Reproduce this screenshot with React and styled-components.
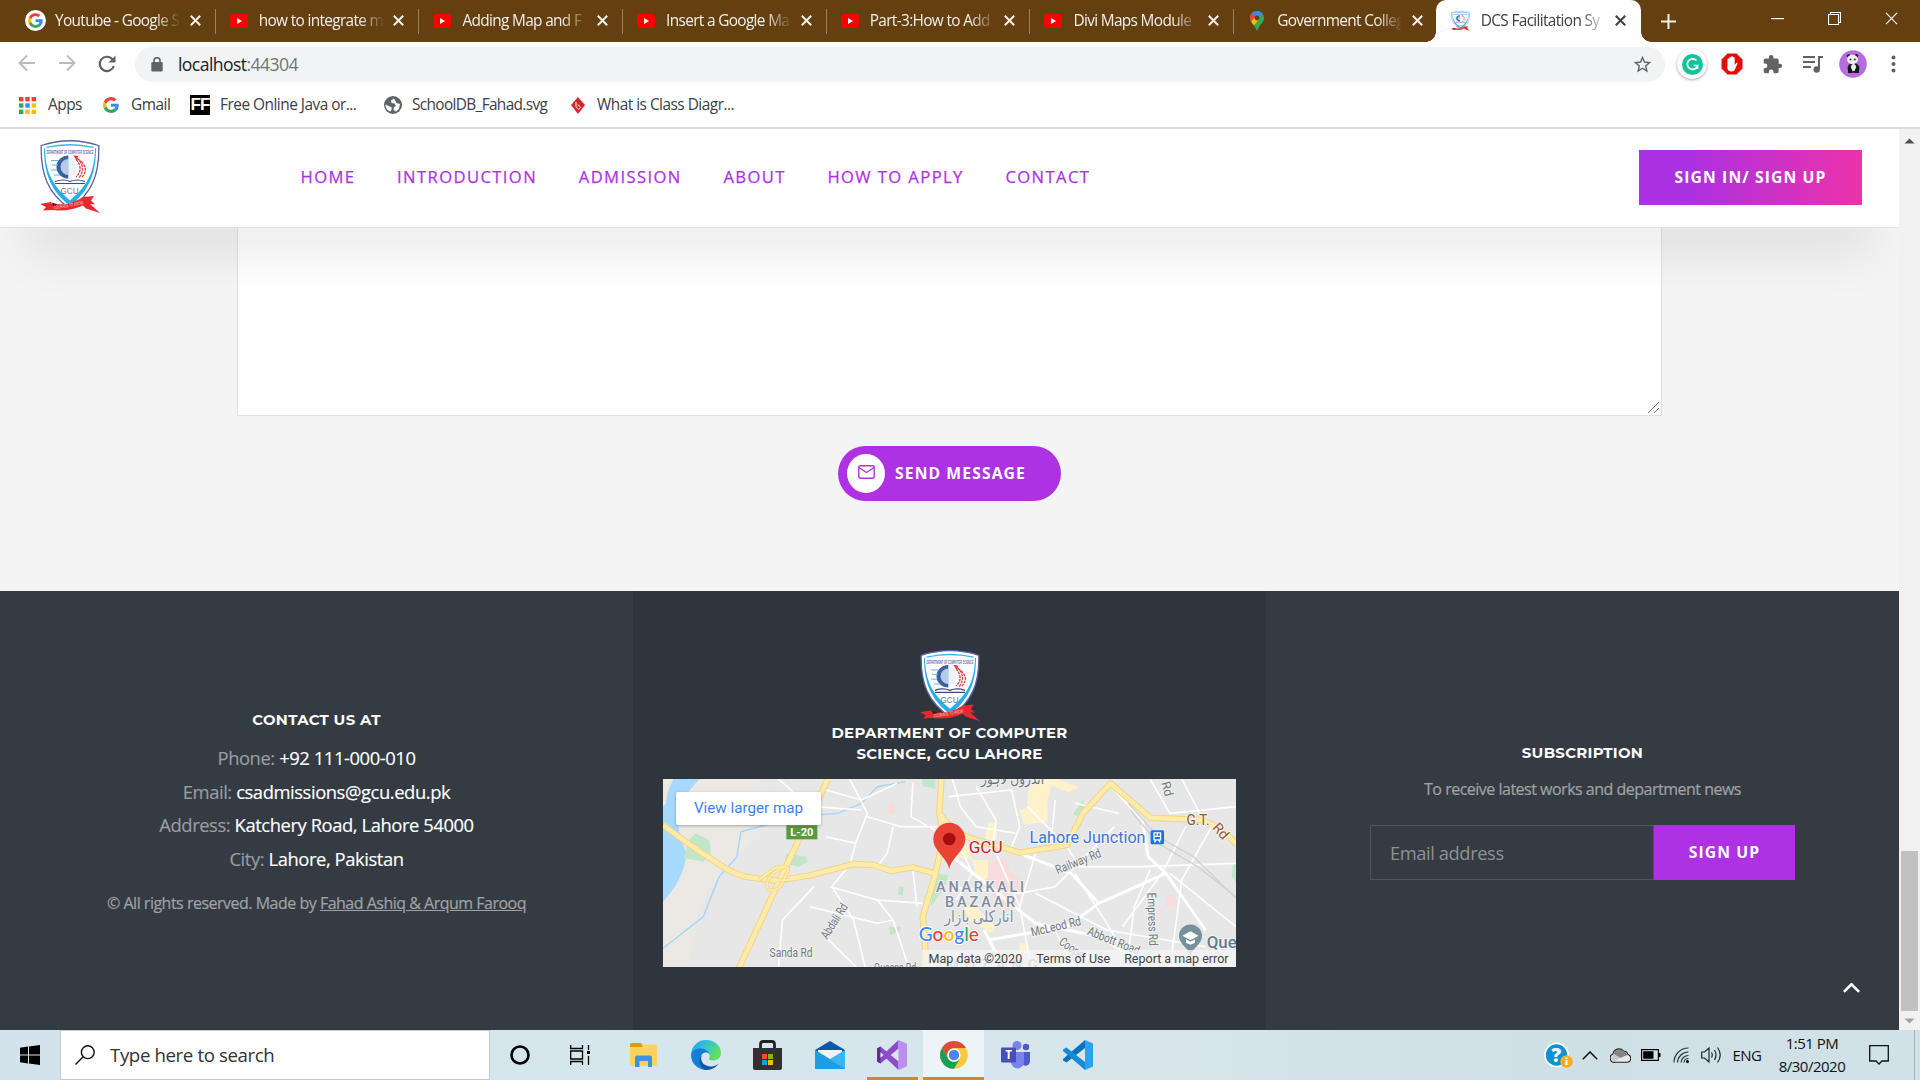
import React from "react";
import styled, { createGlobalStyle, css } from "styled-components";

const Global = createGlobalStyle`
  * { box-sizing: border-box; }
  html, body { margin: 0; padding: 0; }
  body { width: 1920px; height: 1080px; overflow: hidden; background: #fff; font-family: "Open Sans", "Noto Sans", sans-serif; }
  svg { display: block; flex: none; }
`;

const Screen = styled.div`
  width: 1920px;
  height: 1080px;
  display: flex;
  flex-direction: column;
`;

/* ---------- browser chrome ---------- */
const TabStrip = styled.div`
  height: 42px;
  flex: none;
  background: #643f10;
  display: flex;
  padding-left: 11px;
`;
const Tab = styled.div`
  width: ${(p) => (p.$active ? "205px" : "203.7px")};
  height: 42px;
  flex: none;
  display: flex;
  align-items: center;
  padding-left: ${(p) => (p.$active ? "15px" : "14px")};
  padding-bottom: 1px;
  position: relative;
  color: ${(p) => (p.$active ? "#3c4043" : "#f3efe9")};
  ${(p) =>
    p.$active
      ? css`
          background: #fff;
          border-radius: 10px 10px 0 0;
          margin-left: -1px;
          &::before, &::after {
            content: "";
            position: absolute;
            bottom: 0;
            width: 10px;
            height: 10px;
          }
          &::before { left: -10px; background: radial-gradient(circle at 0 0, transparent 9.5px, #fff 10px); }
          &::after { right: -10px; background: radial-gradient(circle at 100% 0, transparent 9.5px, #fff 10px); }
        `
      : css`
          &::after {
            content: "";
            position: absolute;
            right: -1px;
            display: ${p.$last ? "none" : "block"};
            top: 9px;
            width: 1px;
            height: 25px;
            background: #9a815f;
          }
        `}
`;
const Favicon = styled.div`
  width: 20px;
  height: 20px;
  margin-right: 10px;
  display: flex;
  align-items: center;
  justify-content: center;
`;
const TabTitle = styled.div`
  width: 124px;
  margin-right: 10.5px;
  overflow: hidden;
  white-space: nowrap;
  font-size: 15.4px;
  line-height: 24px;
  letter-spacing: -0.66px;
  mask-image: linear-gradient(90deg, #000 100px, transparent 126px);
`;
const NewTab = styled.div`
  width: 40px;
  margin-left: 8px;
  display: flex;
  align-items: center;
  justify-content: center;
`;
const WindowButtons = styled.div`
  margin-left: auto;
  display: flex;
  height: 37px;
  align-items: center;
`;
const WindowButton = styled.div`
  width: 57px;
  display: flex;
  justify-content: center;
`;
const Toolbar = styled.div`
  height: 44px;
  flex: none;
  display: flex;
  align-items: center;
`;
const ToolSlot = styled.div`
  width: 40.2px;
  display: flex;
  justify-content: center;
`;
const NavButtons = styled.div`
  display: flex;
  width: 135px;
  padding-left: 7px;
`;
const Omnibox = styled.div`
  width: 1530px;
  height: 35px;
  border-radius: 18px;
  background: #f1f3f4;
  display: flex;
  align-items: center;
  padding: 0 12px 0 16px;
`;
const Url = styled.div`
  margin-left: 15px;
  flex: 1;
  font-size: 17.6px;
  letter-spacing: -0.58px;
  line-height: 26px;
  color: #202124;
  span { color: #70757a; }
`;
const Extensions = styled.div`
  display: flex;
  padding-left: 7px;
  align-items: center;
`;
const GrammarlyBadge = styled.div`
  width: 30px;
  height: 30px;
  border-radius: 50%;
  background: #fff;
  box-shadow: 0 1px 3px rgba(0, 0, 0, 0.35);
  display: flex;
  align-items: center;
  justify-content: center;
`;
const Bookmarks = styled.div`
  height: 41px;
  flex: none;
  display: flex;
  align-items: center;
  padding-left: 19px;
  padding-bottom: 3px;
`;
const Bookmark = styled.div`
  display: flex;
  align-items: center;
  gap: ${(p) => p.$gap || 10}px;
  width: ${(p) => p.$w}px;
  white-space: nowrap;
  font-size: 15.4px;
  line-height: 24px;
  letter-spacing: ${(p) => p.$ls || "-0.5px"};
  color: #3c4043;
`;
const FF = styled.div`
  width: 20px;
  height: 20px;
  background: #000;
  color: #fff;
  font: bold 17px/20px "Liberation Sans", Arial, sans-serif;
  letter-spacing: -1px;
  text-align: center;
`;

/* ---------- page ---------- */
const Viewport = styled.div`
  height: 903px;
  flex: none;
  display: flex;
  border-top: 2px solid #dadce0;
  overflow: hidden;
`;
const Page = styled.div`
  width: 1899px;
  display: flex;
  flex-direction: column;
  background: #f4f4f4;
  overflow: hidden;
`;
const Header = styled.header`
  height: 99px;
  flex: none;
  background: #fff;
  border-bottom: 1px solid #e4e4e4;
  box-shadow: 0 50px 50px -25px rgba(0, 0, 0, 0.085);
  z-index: 2;
  display: flex;
  align-items: center;
  padding: 0 37px 2px 40px;
`;
const Nav = styled.nav`
  display: flex;
  gap: 41.7px;
  margin-left: 200.5px;
  flex: 1;
`;
const NavLink = styled.a`
  color: #ae32e4;
  font-size: 16.6px;
  -webkit-text-stroke: 0.25px #ae32e4;
  letter-spacing: 1.4px;
  line-height: 24px;
  white-space: nowrap;
`;
const SolidButton = styled.div`
  width: ${(p) => p.$w}px;
  height: 55px;
  display: flex;
  align-items: center;
  justify-content: center;
  padding-bottom: 1px;
  color: #fff;
  font-size: 15.7px;
  font-weight: 700;
  letter-spacing: 1.1px;
  white-space: nowrap;
  background: ${(p) => (p.$gradient ? "linear-gradient(90deg, #ab31e2 22%, #ed32a9 100%)" : "#ae32e4")};
`;
const FormArea = styled.section`
  height: 363px;
  flex: none;
  display: flex;
  flex-direction: column;
  align-items: center;
  padding-right: 1px;
`;
const MessageBox = styled.div`
  width: 1425px;
  height: 188px;
  background: #fff;
  border: 1px solid #e1e1e1;
  border-top: 0;
  display: flex;
  align-items: flex-end;
  justify-content: flex-end;
`;
const SendButton = styled.div`
  margin-top: 30px;
  width: 223px;
  height: 55px;
  border-radius: 28px;
  background: #ae32e4;
  display: flex;
  align-items: center;
  padding-left: 9px;
  color: #fff;
  font-size: 15.7px;
  font-weight: 700;
  letter-spacing: 1.1px;
  white-space: nowrap;
`;
const SendLabel = styled.span`
  padding-bottom: 1px;
`;
const SendIcon = styled.div`
  width: 38px;
  height: 39px;
  border-radius: 50%;
  background: #fff;
  display: flex;
  align-items: center;
  justify-content: center;
  margin-right: 10.5px;
  padding: 0 0 3px 1px;
`;
const Footer = styled.footer`
  height: 440px;
  flex: none;
  display: flex;
`;
const FooterCol = styled.div`
  width: 633px;
  display: flex;
  flex-direction: column;
  align-items: center;
  padding-top: ${(p) => p.$top}px;
  background: ${(p) => (p.$dark ? "#2f353d" : "#353b43")};
  position: relative;
`;
const Heading = styled.h6`
  margin: ${(p) => p.$mt || 0}px 0 0;
  font-family: Montserrat, Inter, sans-serif;
  font-size: 14.9px;
  font-weight: 700;
  line-height: 21px;
  letter-spacing: 0.3px;
  color: #fff;
  text-align: center;
  white-space: pre-line;
`;
const ContactList = styled.div`
  margin-top: 10px;
  display: flex;
  flex-direction: column;
  align-items: center;
`;
const ContactLine = styled.div`
  font-size: 18.4px;
  line-height: 33.7px;
  letter-spacing: -0.43px;
  color: #fff;
  -webkit-text-stroke: 0.15px;
  white-space: nowrap;
  span { color: #9b9da1; }
`;
const SmallText = styled.p`
  margin: ${(p) => p.$mt}px 0 0;
  font-size: 16px;
  line-height: 24px;
  letter-spacing: -0.5px;
  color: #a0a2a5;
  -webkit-text-stroke: 0.2px;
  white-space: nowrap;
`;
const Subscribe = styled.div`
  display: flex;
  margin-top: 24px;
`;
const EmailField = styled.div`
  width: 284px;
  height: 55px;
  border: 1px solid #50565c;
  padding-left: 19px;
  font-size: 18.3px;
  line-height: 53px;
  letter-spacing: -0.4px;
  color: #8d9196;
`;
const ToTop = styled.div`
  position: absolute;
  right: 39px;
  bottom: 38px;
`;
const MapFrame = styled.div`
  width: 573px;
  height: 188px;
  margin-top: 14px;
  position: relative;
  overflow: hidden;
`;
const MapLink = styled.div`
  position: absolute;
  left: 13px;
  top: 13px;
  width: 145px;
  height: 33px;
  border-radius: 2px;
  background: #fff;
  box-shadow: 0 1px 3px rgba(0, 0, 0, 0.3);
  color: #427fed;
  font: 15.2px/32px Roboto, sans-serif;
  text-align: center;
  white-space: nowrap;
`;
const MapCredits = styled.div`
  position: absolute;
  right: 0;
  bottom: 0;
  height: 17px;
  padding: 0 7.5px 0 7px;
  background: rgba(245, 245, 245, 0.75);
  display: flex;
  gap: 14px;
  color: #444;
  font: 12.5px/17px Roboto, sans-serif;
  white-space: nowrap;
`;

const ScrollTrack = styled.div`
  width: 21px;
  background: #f1f1f1;
  display: flex;
  flex-direction: column;
  align-items: center;
  padding: 9px 0 6px;
`;
const ScrollThumb = styled.div`
  width: 17px;
  height: 160px;
  margin-top: auto;
  margin-bottom: 7px;
  background: #c1c1c1;
`;

/* ---------- taskbar ---------- */
const Taskbar = styled.div`
  height: 50px;
  flex: none;
  display: flex;
  background: linear-gradient(90deg, #d2e3ec, #d6e6ec 40%, #d8e6eb 60%, #cfdfe6 80%, #d0e1e8);
`;
const TaskCell = styled.div`
  width: ${(p) => p.$w || 61.7}px;
  height: 50px;
  display: flex;
  align-items: center;
  justify-content: center;
  background: ${(p) => (p.$active ? "#edf4f7" : "none")};
  box-shadow: ${(p) => (p.$active ? "inset 0 -3px #cd8a2d" : "none")};
`;
const OpenMark = styled.div`
  width: 51px;
  height: 50px;
  display: flex;
  align-items: center;
  justify-content: center;
  box-shadow: inset 0 -3px #cd8a2d;
`;
const SearchBox = styled.div`
  width: 430px;
  height: 50px;
  background: #fff;
  border: 1px solid #c6c8c9;
  display: flex;
  align-items: center;
  padding: 0 0 1px 14px;
  gap: 15px;
  font-size: 18.7px;
  letter-spacing: -0.4px;
  color: #333;
`;
const Tray = styled.div`
  margin-left: auto;
  display: flex;
  align-items: center;
  color: #111;
  font-size: 15px;
`;
const TrayCell = styled.div`
  width: ${(p) => p.$w}px;
  padding-right: ${(p) => p.$pr || 0}px;
  display: flex;
  justify-content: center;
  letter-spacing: -0.5px;
`;
const Clock = styled.div`
  width: 88px;
  text-align: center;
  font-size: 15px;
  line-height: 23px;
  letter-spacing: -0.5px;
  white-space: nowrap;
`;
const ShowDesktop = styled.div`
  width: 6px;
  height: 50px;
  border-left: 1px solid #a3b0b6;
`;

/* ---------- drawings ---------- */
const GoogleG = ({ size = 16, badge }) => (
  <svg width={size} height={size} viewBox={badge ? "-5 -5 34 34" : "0 0 24 24"}>
    {badge && <circle cx="12" cy="12" r="17" fill="#fff" />}
    <path fill="#4285F4" d="M23.5 12.3c0-.8-.1-1.6-.2-2.3H12v4.500h6.500a5.500 5.500 0 0 1-2.400 3.600v3h3.900c2.200-2.100 3.500-5.100 3.500-8.800z" />
    <path fill="#34A853" d="M12 24c3.200 0 6-1.100 8-2.900l-3.900-3c-1.100.7-2.500 1.200-4.100 1.200-3.100 0-5.800-2.100-6.700-5H1.300v3.100A12 12 0 0 0 12 24z" />
    <path fill="#FBBC05" d="M5.300 14.300a7.200 7.200 0 0 1 0-4.600V6.600h-4a12 12 0 0 0 0 10.800z" />
    <path fill="#EA4335" d="M12 4.800c1.800 0 3.300.6 4.600 1.800L20 3.200A12 12 0 0 0 1.300 6.600l4 3.100c.9-2.900 3.600-4.900 6.700-4.900z" />
  </svg>
);
const YouTube = () => (
  <svg width="18" height="14" viewBox="0 0 18 14">
    <rect width="18" height="14" rx="3" fill="#f00" />
    <path d="M7 4l5 3-5 3z" fill="#fff" />
  </svg>
);
const MapsPin = ({ w = 14, h = 20 }) => (
  <svg width={w} height={h} viewBox="0 0 14 20">
    <path d="M7 0C3 0 0 3 0 7c0 4 3 5.500 5 9l2 4 2-4c2-3.500 5-5 5-9 0-4-3-7-7-7z" fill="#34a853" />
    <path d="M0 7c0-1.800.7-3.500 2-4.800l4 3.300L1.500 11C.6 9.900 0 8.600 0 7z" fill="#ea4335" />
    <path d="M1.700 2.500A7 7 0 0 1 12.500 2.600L8 8z" fill="#4285f4" />
    <path d="M1.200 10.600L6 5l2.500 4-4.600 5.400c-1-1.300-2.100-2.300-2.700-3.800z" fill="#fbbc04" />
    <circle cx="7" cy="7" r="2.400" fill="#643f10" />
  </svg>
);
const Cross = ({ size = 11, color, w = 2 }) => (
  <svg width={size} height={size} viewBox="0 0 11 11" stroke={color} strokeWidth={w}>
    <path d="M.8.8l9.400 9.400M10.200.8L.8 10.200" />
  </svg>
);
const Crest = ({ w = 60, h = 74 }) => (
  <svg width={w} height={h} viewBox="0 0 60 74" preserveAspectRatio="none">
    <path d="M1.200 5.500Q30-4 58.800 5.500C59.500 34 52 54 30 68.500C8 54 .5 34 1.200 5.500z" fill="#fff" stroke="#5a62a4" strokeWidth="1.300" />
    <path d="M4 8C4 34 11 51 30 66C49 51 56 34 56 8L55 8.500C54.500 32 48 45 30 60.500C12 45 5.500 32 5 8.500z" fill="#27aee8" />
    <path d="M6.500 8Q30 3 53.500 8L53.500 6.800Q30 1 6.500 6.800z" fill="#35b8ee" />
    <text x="6.500" y="14" textLength="47" lengthAdjust="spacingAndGlyphs" fontFamily="Liberation Sans, sans-serif" fontWeight="bold" fontSize="5.500" fill="#6a6eaa">DEPARTMENT OF COMPUTER SCIENCE</text>
    <path d="M28.500 15.500A12 11.500 0 0 0 28.500 38.500z" fill="#3e5f9e" />
    <path d="M28.500 19A8 8 0 0 0 28.500 35z" fill="#b3cde8" />
    <path d="M28.500 16A11 11.500 0 0 1 28.500 38" fill="#eef3f8" />
    <path d="M11 20.500h7M12 25h6M11 30h6M14 35h6" stroke="#5cb8e6" strokeWidth="1" />
    <path d="M37 18c7 6 7 13 2 20M38 19c9 6 9 13 4 18M36 19c6 8 5 13 0 18" fill="none" stroke="#dc3c44" strokeWidth="1.300" strokeDasharray="3 .8" />
    <path d="M33.500 15.500l5 .5-2.500 3.500z" fill="#e22d35" />
    <path d="M15 41.500q8-3 15 0q7-3 15 0M15 43.500h30" fill="none" stroke="#3d4789" strokeWidth="1.200" />
    <text x="20.500" y="54" textLength="18" lengthAdjust="spacingAndGlyphs" fontFamily="Liberation Sans, sans-serif" fontSize="9" fill="#75718f">GCU</text>
    <path d="M0 64l11-2 1 2Q30 66 43 57l11-1-3 4.500 4 4-5-.5 10 9-14-4.500-3-3Q28 72 12 70l-9 .5 3-3.500z" fill="#e4292f" />
    <path d="M12 62.500l6 2-5 1.500z" fill="#4a1b22" />
    <text transform="translate(14 69.500) rotate(-10)" textLength="30" lengthAdjust="spacingAndGlyphs" fontFamily="Liberation Sans, sans-serif" fontSize="5" fill="#ffd9da">COURAGE TO KNOW</text>
  </svg>
);

const Arrow = ({ flip }) => (
  <svg width="18" height="18" viewBox="0 0 18 18" fill="none" stroke="#babcbe" strokeWidth="1.900" transform={flip ? "scale(-1 1)" : undefined}>
    <path d="M17 9H2M9 1.500L1.500 9L9 16.500" />
  </svg>
);
const Reload = () => (
  <svg width="20" height="20" viewBox="0 0 20 20" fill="none" stroke="#5f6368" strokeWidth="2.200">
    <path d="M16.800 12a7.200 7.200 0 1 1-1.300-6.600L17.500 7.500" />
    <path d="M18.500 1.500V8.500H11.500z" fill="#5f6368" stroke="none" />
  </svg>
);
const Lock = () => (
  <svg width="12" height="15" viewBox="0 0 12 15">
    <rect x=".3" y="5" width="11.400" height="9.500" rx="1.300" fill="#5f6368" />
    <path d="M3 6V3.700a3 3 0 0 1 6 0V6" fill="none" stroke="#5f6368" strokeWidth="1.600" />
  </svg>
);
const Star = () => (
  <svg width="21" height="21" viewBox="0 0 24 24" fill="#5f6368">
    <path d="M22 9.240l-7.190-.62L12 2 9.190 8.630 2 9.240l5.460 4.730L5.820 21 12 17.270 18.180 21l-1.630-7.030zM12 15.400l-3.760 2.270 1-4.280-3.320-2.880 4.380-.38L12 6.100l1.710 4.040 4.380.38-3.320 2.880 1 4.280z" />
  </svg>
);
const Adblock = () => (
  <svg width="22" height="22" viewBox="0 0 22 22">
    <path d="M6.500.5h9l6 6v9l-6 6h-9l-6-6v-9z" fill="#e40d0d" />
    <path d="M6.500 12V6.500a.9.9 0 0 1 1.800 0V10V4.800a.9.9 0 0 1 1.800 0V9.500V4a.9.9 0 0 1 1.800 0V9.500V5a.9.9 0 0 1 1.800 0V12l1.500-2c.6-.6 1.500-.1 1.200.7l-2.600 6c-.6 1.200-1.500 1.700-3 1.700c-3 0-4.500-1.500-4.500-4z" fill="#fff" />
  </svg>
);
const Puzzle = () => (
  <svg width="21" height="21" viewBox="0 0 24 24" fill="#5f6368">
    <path d="M20.500 11H19V7c0-1.100-.9-2-2-2h-4V3.500a2.500 2.500 0 0 0-5 0V5H4c-1.100 0-2 .9-2 2v3.800h1.500a2.700 2.700 0 0 1 0 5.400H2V20c0 1.100.9 2 2 2h3.800v-1.500a2.700 2.700 0 0 1 5.400 0V22H17c1.100 0 2-.9 2-2v-4h1.500a2.500 2.500 0 0 0 0-5z" />
  </svg>
);
const Playlist = () => (
  <svg width="21" height="18" viewBox="0 0 21 18">
    <path d="M1 2h12M1 7h12M1 12h8" stroke="#5f6368" strokeWidth="2" />
    <path d="M17 14V2h4" fill="none" stroke="#5f6368" strokeWidth="2" />
    <circle cx="14.700" cy="14.500" r="3.200" fill="#5f6368" />
  </svg>
);
const Panda = () => (
  <svg width="28" height="28" viewBox="0 0 28 28">
    <circle cx="14" cy="14" r="13.800" fill="#b76be3" />
    <ellipse cx="14.500" cy="18" rx="6" ry="5" fill="#222" />
    <ellipse cx="14.500" cy="17.500" rx="2.500" ry="3.500" fill="#eee" />
    <path d="M9 17v6h4v-4zM20 17v6h-4v-4z" fill="#181818" />
    <circle cx="9.500" cy="6" r="1.800" fill="#222" />
    <circle cx="17.500" cy="5.800" r="1.800" fill="#222" />
    <ellipse cx="13.500" cy="9.500" rx="5.500" ry="4.700" fill="#efefef" />
    <circle cx="11.500" cy="9.500" r="1" fill="#333" />
    <circle cx="15.800" cy="9.500" r="1" fill="#333" />
  </svg>
);
const Dots = () => (
  <svg width="5" height="18" viewBox="0 0 5 18" fill="#5f6368">
    <circle cx="2.500" cy="2.500" r="2" /><circle cx="2.500" cy="9" r="2" /><circle cx="2.500" cy="15.500" r="2" />
  </svg>
);
const AppsGrid = () => {
  const colors = ["#ea4335", "#ea4335", "#ea4335", "#34a853", "#4285f4", "#fbbc04", "#34a853", "#fbbc04", "#fbbc04"];
  return (
    <svg width="17" height="17" viewBox="0 0 17 17">
      {colors.map((c, i) => <rect key={i} x={(i % 3) * 6.300} y={Math.floor(i / 3) * 6.300} width="4.400" height="4.400" fill={c} />)}
    </svg>
  );
};
const Globe = () => (
  <svg width="18" height="18" viewBox="0 0 18 18">
    <circle cx="9" cy="9" r="9" fill="#5f6368" />
    <path d="M10 2.500L7 4.500 7.500 7l3 .5 1.500 2.500-2 1L9.500 14 12 15.500l3-2.500 1-5-3.500-1zM1.500 8.500l4 2 2 .5v3L6 15.500A7 7 0 0 1 1.500 8.500z" fill="#fff" />
  </svg>
);
const Paradigm = () => (
  <svg width="14" height="17" viewBox="0 0 14 17">
    <path d="M7 0l7 8-7 9-7-9z" fill="#cf2b2f" />
    <path d="M5 5v4.500L7.500 12.500 9.500 10.500 7 7.500" fill="none" stroke="#fff" strokeWidth="1" />
  </svg>
);
const Triangle = ({ down, color }) => (
  <svg width="11" height="6" viewBox="0 0 11 6"><path d={down ? "M.5.5h10L5.500 5.500z" : "M.5 5.500h10L5.500.5z"} fill={color} /></svg>
);
const Mail = () => (
  <svg width="17" height="14" viewBox="0 0 17 14" fill="none" stroke="#ae32e4" strokeWidth="1.400">
    <rect x=".8" y=".8" width="15.400" height="12.400" rx="1.500" />
    <path d="M1 2.500l7.500 5L16 2.500" />
  </svg>
);

/* ---------- map ---------- */
const px = (x) => (x - 58) / 2.529;
const py = (y) => (y - 417) / 3;
const Roads = ({ d, color, w }) => <path d={d} fill="none" stroke={color} strokeWidth={w} strokeLinejoin="round" vectorEffect="non-scaling-stroke" />;
const Label = ({ x, y, size = 12.5, len, rot = 0, fill = "#6f7780", weight = 400, anchor = "middle", spaced, children }) => (
  <text
    transform={`translate(${px(x)} ${py(y)}) rotate(${rot})`}
    textAnchor={anchor}
    textLength={len}
    lengthAdjust={spaced ? "spacing" : "spacingAndGlyphs"}
    fontFamily="Roboto, 'DejaVu Sans', sans-serif"
    fontSize={size}
    fontWeight={weight}
    fill={fill}
    stroke="#f3f3f3"
    strokeWidth="2"
    paintOrder="stroke"
  >
    {children}
  </text>
);
const MAIN_ROADS =
  "M58 555Q130 620 190 665Q245 712 290 714L350 722L430 706L540 672L590 675L635 693L690 682L745 700M475 417L345 740L250 985M762 417L757 520L768 590L745 710L715 830L725 985M757 520Q790 580 850 600L960 638L1080 615L1120 520L1190 430L1290 533L1420 540Q1470 560 1510 615";
const CityMap = () => (
  <svg width="573" height="188" viewBox="0 0 573 188">
    <rect width="573" height="188" fill="#e7e7e7" />
    <g transform="scale(.39541 .33333) translate(-58 -417)">
      <path d="M58 417H300L330 560 215 680 150 800 120 985H58z" fill="#ece9e4" />
      <path d="M58 417H150Q105 475 98 520Q90 570 118 640Q110 720 58 785z" fill="#a7d8fd" />
      <path d="M58 417H85Q65 460 66 490L58 500z" fill="#ece9e4" />
      <path d="M140 580l35 20 5 40-20 25-50-10 10-50zM370 640l50 10 5 15-25 15-35-10zM712 417h35v30l-30-8zM745 700l35 5-10 40-35 55zM655 740l12 0-3 28-12-4zM1120 478l10 40-20 15-15-10zM1500 670h10v60l-14-20zM630 860l30 0-5 15-22 10z" fill="#c2e6ca" />
      <path d="M995 417h60l55 25-25 15-45-20-10 50 0 60-60 5-10-40 20-10 0-40zM880 550h22v50h-30zM790 600l40 20 10 40-40-10zM840 660l40 0 5 50-30 20zM820 800l20-10 60 70-10 20-60-40zM960 910h20v30h-20z" fill="#fff2cb" />
      <path d="M880 670l45-15 10 40 25 20 0 70-40 40-20-40-20-60zM625 490h20v30h-20zM1330 770l25-15v40l-25 5z" fill="#f8dcdc" />
      <Roads w="1.500" color="#a9d6f7" d="M670 425L600 440L560 490L500 520L400 530L255 575L245 650L200 710L160 830L58 925" />
      <Roads w="1.600" color="#fff" d="M350 417L400 470L460 465M440 500L560 510M470 450L560 480L650 430M530 417L575 520L545 610L530 675L485 740M575 530L660 560L750 560M690 430L685 530L745 570M640 560L625 640L600 680M545 610L470 590M480 740L600 780L715 790M440 740L360 840L350 985M485 740L540 840L570 985M430 800L600 850L640 840M600 780L640 840L680 985M460 880L550 985M690 690L700 800M790 417L810 500L850 560L950 580M780 470L940 450M850 440L900 540L890 640M940 450L960 560L940 620M810 620L840 700L800 780M900 640L960 800L990 985M1000 640L960 800M780 740L960 760M980 500L1080 620M1100 490L1210 520M1040 600L1050 480M1080 620L1110 680L1270 680L1507 670M1200 560L1050 740L960 760M1290 417L1340 520L1507 500M1370 417L1420 530M1340 700L1507 860M1100 700L1180 850L1220 930M1290 690L1250 800L1230 985M1380 560L1320 700L1220 860M1450 550L1370 720L1340 985M1000 760L1180 870L1430 920M1040 850L1100 985" />
      <Roads w="3" color="#fff" d="M1190 435L1270 540L1285 650L1330 700L1430 870M1330 700L1160 790L1080 860L880 900M870 870L920 985M780 640L1000 850L1160 890L1230 940M1160 790L1090 700L960 640" />
      <Roads w="1.500" color="#d0d3d6" d="M1235 490L1310 590L1400 650L1507 775M1240 510L1310 610L1410 680L1507 770" />
      <Roads w="6.500" color="#efd489" d={MAIN_ROADS} />
      <Roads w="4.500" color="#ffeba8" d={MAIN_ROADS} />
      <Roads w="3.500" color="#efd489" d="M365 680Q325 700 320 735Q325 765 355 740L375 690Q370 670 340 685L300 720M350 720L380 720" />
      <Roads w="2" color="#ffeba8" d="M365 680Q325 700 320 735Q325 765 355 740L375 690Q370 670 340 685L300 720M350 720L380 720" />
    </g>
    <rect x={px(370)} y={py(556)} width="31" height="14" fill="#5b9a3c" />
    <text x={px(409)} y={py(588)} textAnchor="middle" textLength="23" fontFamily="Roboto, sans-serif" fontWeight="700" fontSize="11" fill="#fff">L-20</text>
    <Label x={942} y={433} size={15} len={63}>اندرون لاہور</Label>
    <Label x={1323} y={450} rot={75} len={15}>Rd</Label>
    <Label x={1411} y={554} size={15} len={23} fill="#8b5a2b">G.T.</Label>
    <Label x={1460} y={583} size={14} rot={48} len={17} fill="#8b5a2b">Rd</Label>
    <Label x={985} y={608} size={16} len={116} fill="#3d73d8" anchor="start">Lahore Junction</Label>
    <rect x={px(1291)} y={py(571)} width="13.500" height="14" rx="1.500" fill="#1a73e8" />
    <path transform={`translate(${px(1291)} ${py(571)})`} d="M3.500 2.500h6.500v7h-6.500zM4 12l1.500-2.500M9.500 12L8 9.500M3.500 6h6.500M6.700 3v3" fill="none" stroke="#fff" strokeWidth="1.300" />
    <Label x={1112} y={676} rot={-22} len={48}>Railway Rd</Label>
    <Label x={500} y={850} rot={-57} len={39}>Abdali Rd</Label>
    <Label x={382} y={951} len={43}>Sanda Rd</Label>
    <Label x={1054} y={872} rot={-13} len={51}>McLeod Rd</Label>
    <Label x={1194} y={914} rot={22} len={55}>Abbott Road</Label>
    <Label x={1085} y={934} rot={36} len={27}>Coope</Label>
    <Label x={1285} y={838} rot={88} len={53}>Empress Rd</Label>
    <Label x={860} y={755} size={14.5} len={88} weight={500} fill="#818b9d" spaced>ANARKALI</Label>
    <Label x={860} y={800} size={14.5} len={70} weight={500} fill="#818b9d" spaced>BAZAAR</Label>
    <Label x={857} y={845} size={16} len={69} fill="#818b9d">انارکلی بازار</Label>
    <Label x={890} y={990} size={15} len={92} weight={500} fill="#818b9d" spaced>MOZANG</Label>
    <Label x={645} y={996} len={42}>Queens Rd</Label>
    <path transform={`translate(${px(782)} ${py(688)})`} d="M0 0C-2-12-16-18-16-30a16 16.500 0 0 1 32 0C16-18 2-12 0 0z" fill="#ea4335" />
    <circle cx={px(782)} cy={py(597)} r="6.300" fill="#a50e0e" />
    <Label x={831} y={639} size={17} len={34} fill="#c5221f" anchor="start">GCU</Label>
    <path transform={`translate(${px(1392)} ${py(948)})`} d="M0 0C-1-8-11.500-11-11.500-20a11.500 11.500 0 0 1 23 0C11.500-11 1-8 0 0z" fill="#78909c" />
    <path transform={`translate(${px(1392)} ${py(890)})`} d="M-8-1L0-5.500 8-1 0 3.500zM-4.500 2.500V6L0 8 4.500 6V2.500L0 5z" fill="#fff" />
    <Label x={1433} y={923} size={17} anchor="start" weight={500} len={30} fill="#607d8b">Que</Label>
    <text x={px(705)} y={py(904)} fontFamily="Lato, sans-serif" fontSize="20" textLength="60" lengthAdjust="spacingAndGlyphs" stroke="#fff" strokeWidth="2" paintOrder="stroke" fontWeight="500">
      <tspan fill="#4285f4">G</tspan><tspan fill="#ea4335">o</tspan><tspan fill="#fbbc05">o</tspan><tspan fill="#4285f4">g</tspan><tspan fill="#34a853">l</tspan><tspan fill="#ea4335">e</tspan>
    </text>
  </svg>
);

/* ---------- taskbar drawings ---------- */
const WindowsLogo = () => (
  <svg width="20" height="20" viewBox="0 0 20 20"><path d="M0 2.800L8 1.600V9.500H0zM9 1.500L20 0V9.500H9zM0 10.500H8V18.400L0 17.200zM9 10.500H20V20L9 18.500z" /></svg>
);
const SearchGlass = () => (
  <svg width="20" height="20" viewBox="0 0 20 20" fill="none" stroke="#111" strokeWidth="1.400"><circle cx="12.800" cy="7.200" r="6.400" /><path d="M8.200 11.800L.5 19.500" /></svg>
);
const TaskView = () => (
  <svg width="21" height="20" viewBox="0 0 21 20" fill="none" stroke="#000" strokeWidth="1.300">
    <path d="M.7 0V3.500H12.500V0M.7 20V16.500H12.500V20M.7 6H12.500V14H.7zM18.500 0V5M18.500 11V20" /><rect x="17" y="6" width="3" height="3" fill="#000" stroke="none" />
  </svg>
);
const Explorer = () => (
  <svg width="27" height="24" viewBox="0 0 27 24">
    <path d="M0 1.500Q0 0 1.500 0H11l2 3v3H0z" fill="#dc9b0c" />
    <path d="M0 4H12l2-2.500H25.500Q27 1.500 27 3V21.500Q27 23 25.500 23H1.500Q0 23 0 21.500z" fill="#ffd25e" />
    <path d="M5 24V14.500Q5 12.500 7 12.500H20Q22 12.500 22 14.500V24H18V18H9.500V24z" fill="#3e93d8" />
  </svg>
);
const Edge = () => (
  <svg width="30" height="30" viewBox="0 0 30 30">
    <defs>
      <linearGradient id="edgeTop" x1="0" y1="0" x2="1" y2=".5"><stop offset="0" stopColor="#1a9fe0" /><stop offset=".5" stopColor="#34c1d9" /><stop offset="1" stopColor="#62e15a" /></linearGradient>
    </defs>
    <path d="M0 15A15 15 0 0 1 15 0C24 0 30 6 30 13C30 18 26 20.500 22 20.500C18 20.500 17.500 19 18.500 17.500C20 14 16 10 10 10C4 10 1 13 0 15z" fill="url(#edgeTop)" />
    <path d="M0 15C1 10 6 8 10 8.500C15 9 18 11.500 18.500 14C13 10 9 15 9.500 20C10 25 14 29 18 29.700A15 15 0 0 1 0 15z" fill="#137fd6" />
    <path d="M11 15C8 21 13 26.500 20 26.500C24 26.500 27 24 27.800 23.500A15 15 0 0 1 15 30C9 29 6 19 11 15z" fill="#1257a3" />
  </svg>
);
const Store = () => (
  <svg width="29" height="30" viewBox="0 0 29 30">
    <path d="M7.500 9V4.500Q7.500 1.500 10 1.500H19Q21.500 1.500 21.500 4.500V9" fill="none" stroke="#222" strokeWidth="2.800" />
    <path d="M0 8H29V28Q29 30 27 30H2Q0 30 0 28z" fill="#313131" />
    <path d="M9 14h5v5H9z" fill="#f25022" /><path d="M15 14h5v5h-5z" fill="#7fba00" /><path d="M9 20h5v5H9z" fill="#00a4ef" /><path d="M15 20h5v5h-5z" fill="#ffb900" />
  </svg>
);
const MailApp = () => (
  <svg width="30" height="28" viewBox="0 0 30 28">
    <path d="M0 9L15 0L30 9V14H0z" fill="#075ba8" /><path d="M3 9H27V18H3z" fill="#f2f2f2" />
    <path d="M0 9L15 18L30 9V28H0z" fill="#39b6ee" /><path d="M0 9L30 28H0z" fill="#1c9de5" />
  </svg>
);
const VisualStudio = () => (
  <svg width="30" height="30" viewBox="0 0 30 30">
    <path d="M0 8.500L3.500 6.500L21.500 21.500V30L3.500 13V17L21.500 0V8.500L3.500 23.500L0 21.500z" fill="#8a4cc8" fillRule="nonzero" />
    <path d="M0 8.500L3.500 6.500V23.500L0 21.500z" fill="#5e2e94" />
    <path d="M3.500 12.200V17.800L6.700 15z" fill="#d6e6ec" />
    <path d="M21.500 0L30 3.800V26.200L21.500 30z" fill="#bd8df2" />
  </svg>
);
const VSCode = () => (
  <svg width="30" height="30" viewBox="0 0 30 30">
    <path d="M0 19L22 0V8L3.500 22.500L0 20.500z" fill="#0a75bd" />
    <path d="M0 11L22 30V22L3.500 7.500L0 9.500z" fill="#178bd4" />
    <path d="M22 0l8 3.500V26.500L22 30z" fill="#29a3f0" />
  </svg>
);
const ChromeLogo = () => (
  <svg width="28" height="28" viewBox="0 0 28 28">
    <circle cx="14" cy="14" r="13.800" fill="#fbc83b" />
    <path d="M2 7A13.800 13.800 0 0 1 26 7H14A7 7 0 0 0 8 17.500z" fill="#dd4b3e" />
    <path d="M2 7A13.800 13.800 0 0 0 14 27.800L20 17.500A7 7 0 0 1 8 17.500z" fill="#1a9e58" />
    <circle cx="14" cy="14" r="6.600" fill="#fff" /><circle cx="14" cy="14" r="5.200" fill="#4a87ee" />
  </svg>
);
const Teams = () => (
  <svg width="29" height="28" viewBox="0 0 29 28">
    <circle cx="25" cy="6" r="3.200" fill="#5059c9" /><path d="M21 11h8v9a4.500 4.500 0 0 1-8 3z" fill="#5059c9" />
    <circle cx="16" cy="4.500" r="4.500" fill="#7b83eb" /><path d="M10 11H23V21a6.500 6.500 0 0 1-13 0z" fill="#7b83eb" />
    <rect y="6.500" width="15" height="15" rx="1" fill="#464eb8" />
    <text x="7.500" y="18" textAnchor="middle" fontFamily="Open Sans, sans-serif" fontWeight="700" fontSize="11.500" fill="#fff">T</text>
  </svg>
);
const HelpBadge = () => (
  <svg width="29" height="27" viewBox="0 0 29 27">
    <circle cx="12.500" cy="13" r="12.500" fill="#fff" /><circle cx="12.500" cy="13" r="10.700" fill="#0d93d2" />
    <text x="12" y="20" textAnchor="middle" fontFamily="Open Sans, sans-serif" fontWeight="800" fontSize="19" fill="#fff">?</text>
    <circle cx="22.500" cy="19.500" r="6.200" fill="#f8ac1a" /><path d="M22.500 18v5M22.500 15.500v1.500" stroke="#fff" strokeWidth="2" />
  </svg>
);
const Chevron = ({ w, h, color, stroke }) => (
  <svg width={w} height={h} viewBox="0 0 16 9" fill="none" stroke={color} strokeWidth={stroke}><path d="M.8 8.200L8 1L15.200 8.200" /></svg>
);
const Cloud = () => (
  <svg width="21" height="15" viewBox="0 0 21 15">
    <path d="M5 14.300A4.300 4.300 0 0 1 3 6A6 6 0 0 1 13.500 3A5 5 0 0 1 18 6.500A4 4 0 0 1 17 14.300z" fill="#e9eaea" stroke="#222" strokeWidth="1.100" />
    <path d="M3.500 6A6 6 0 0 1 13.500 3.500A5 5 0 0 1 17.500 7L10 10z" fill="#828485" />
    <path d="M1 11L3.500 6L10 9.500L5 13.500z" fill="#c7c9ca" />
  </svg>
);
const Battery = () => (
  <svg width="20" height="12" viewBox="0 0 20 12"><rect x=".6" y=".6" width="16.800" height="10.800" fill="none" stroke="#000" strokeWidth="1.200" /><path d="M2.200 2.200H12.500V9.800H2.200zM18 4h1.500v4H18z" /></svg>
);
const Wifi = () => (
  <svg width="17" height="16" viewBox="0 0 17 16" fill="none" stroke="#333" strokeWidth="1.200">
    <path d="M1 15.500A14.500 14.500 0 0 1 15.500 1M4.500 15.500A11 11 0 0 1 15.500 5M8 15.500A7.500 7.500 0 0 1 15.500 8.500M11 15.500A4.500 4.500 0 0 1 15.500 11.500" /><circle cx="14.500" cy="14.500" r="1.500" fill="#000" stroke="none" />
  </svg>
);
const Volume = () => (
  <svg width="21" height="18" viewBox="0 0 21 18" fill="none" stroke="#222" strokeWidth="1.200">
    <path d="M.7 6H3.500L8 2V16L3.500 12H.7zM10.500 6.500Q12 9 10.500 11.500M13.500 4Q16.500 9 13.500 14M16.500 1.500Q22 9 16.500 16.500" />
  </svg>
);
const Notification = () => (
  <svg width="20" height="20" viewBox="0 0 20 20" fill="none" stroke="#111" strokeWidth="1.300"><path d="M.7.700H19.300V16H13L10 19L7 16H.7z" /></svg>
);

const TABS = [
  { icon: <GoogleG size={21} badge />, title: "Youtube - Google S" },
  { icon: <YouTube />, title: "how to integrate m" },
  { icon: <YouTube />, title: "Adding Map and F" },
  { icon: <YouTube />, title: "Insert a Google Ma" },
  { icon: <YouTube />, title: "Part-3:How to Add" },
  { icon: <YouTube />, title: "Divi Maps Module" },
  { icon: <MapsPin />, title: "Government Colleg" },
  { icon: <Crest w={19} h={20} />, title: "DCS Facilitation Sy", active: true },
];
const BOOKMARKS = [
  { w: 84, gap: 12, icon: <AppsGrid />, text: "Apps" },
  { w: 87, gap: 12, icon: <GoogleG size={16} />, text: "Gmail" },
  { w: 194, icon: <FF>FF</FF>, text: "Free Online Java or..." },
  { w: 187, ls: "-0.65px", icon: <Globe />, text: "SchoolDB_Fahad.svg" },
  { w: 180, gap: 12, icon: <Paradigm />, text: "What is Class Diagr..." },
];
const CONTACTS = [
  ["Phone:", "+92 111-000-010"],
  ["Email:", "csadmissions@gcu.edu.pk"],
  ["Address:", "Katchery Road, Lahore 54000"],
  ["City:", "Lahore, Pakistan"],
];

export default function App() {
  return (
    <Screen>
      <Global />
      <TabStrip>
        {TABS.map((t, i) => (
          <Tab key={i} $active={t.active} $last={i === 6}>
            <Favicon>{t.icon}</Favicon>
            <TabTitle>{t.title}</TabTitle>
            <Cross color={t.active ? "#3c4043" : "#f3efe9"} />
          </Tab>
        ))}
        <NewTab>
          <svg width="15" height="15" viewBox="0 0 15 15" stroke="#f3efe9" strokeWidth="2"><path d="M7.500 0V15M0 7.500H15" /></svg>
        </NewTab>
        <WindowButtons>
          <WindowButton><svg width="13" height="3" viewBox="0 0 13 3"><path d="M0 1h13v1.200H0z" fill="#fff" /></svg></WindowButton>
          <WindowButton><svg width="13" height="13" viewBox="0 0 13 13" fill="none" stroke="#fff" strokeWidth="1.100"><path d="M.5 2.500H10.500V12.500H.5zM2.500 2.500V.5H12.500V10.500H10.500" /></svg></WindowButton>
          <WindowButton><Cross size={13} color="#fff" w={1} /></WindowButton>
        </WindowButtons>
      </TabStrip>
      <Toolbar>
        <NavButtons>
          <ToolSlot><Arrow /></ToolSlot>
          <ToolSlot><Arrow flip /></ToolSlot>
          <ToolSlot><Reload /></ToolSlot>
        </NavButtons>
        <Omnibox>
          <Lock />
          <Url>localhost<span>:44304</span></Url>
          <Star />
        </Omnibox>
        <Extensions>
          <ToolSlot>
            <GrammarlyBadge>
              <svg width="21" height="21" viewBox="0 0 21 21"><circle cx="10.500" cy="10.500" r="10.500" fill="#15c39a" /><path d="M14.500 6.500A5.300 5.300 0 1 0 15.700 11.500H11.500M15.500 11V15" fill="none" stroke="#fff" strokeWidth="1.700" /></svg>
            </GrammarlyBadge>
          </ToolSlot>
          <ToolSlot><Adblock /></ToolSlot>
          <ToolSlot><Puzzle /></ToolSlot>
          <ToolSlot><Playlist /></ToolSlot>
          <ToolSlot><Panda /></ToolSlot>
          <ToolSlot><Dots /></ToolSlot>
        </Extensions>
      </Toolbar>
      <Bookmarks>
        {BOOKMARKS.map((b) => <Bookmark key={b.text} $w={b.w} $gap={b.gap} $ls={b.ls}>{b.icon}{b.text}</Bookmark>)}
      </Bookmarks>
      <Viewport>
        <Page>
          <Header>
            <Crest />
            <Nav>
              {["HOME", "INTRODUCTION", "ADMISSION", "ABOUT", "HOW TO APPLY", "CONTACT"].map((n) => <NavLink key={n}>{n}</NavLink>)}
            </Nav>
            <SolidButton $w={223} $gradient>SIGN IN/ SIGN UP</SolidButton>
          </Header>
          <FormArea>
            <MessageBox>
              <svg width="14" height="14" viewBox="0 0 14 14" stroke="#777" strokeWidth="1"><path d="M1 12L12 1M7 12L12 7" /></svg>
            </MessageBox>
            <SendButton>
              <SendIcon><Mail /></SendIcon>
              <SendLabel>SEND MESSAGE</SendLabel>
            </SendButton>
          </FormArea>
          <Footer>
            <FooterCol $top={119}>
              <Heading>CONTACT US AT</Heading>
              <ContactList>
                {CONTACTS.map(([k, v]) => <ContactLine key={k}><span>{k}</span> {v}</ContactLine>)}
              </ContactList>
              <SmallText $mt={15.5}>© All rights reserved. Made by <u>Fahad Ashiq &amp; Arqum Farooq</u></SmallText>
            </FooterCol>
            <FooterCol $dark $top={59}>
              <Crest w={60} h={72} />
              <Heading $mt={1}>{"DEPARTMENT OF COMPUTER\nSCIENCE, GCU LAHORE"}</Heading>
              <MapFrame>
                <CityMap />
                <MapLink>View larger map</MapLink>
                <MapCredits><span>Map data ©2020</span><span>Terms of Use</span><span>Report a map error</span></MapCredits>
              </MapFrame>
            </FooterCol>
            <FooterCol $top={152}>
              <Heading>SUBSCRIPTION</Heading>
              <SmallText $mt={13}>To receive latest works and department news</SmallText>
              <Subscribe>
                <EmailField>Email address</EmailField>
                <SolidButton $w={141}>SIGN UP</SolidButton>
              </Subscribe>
              <ToTop><Chevron w={17} h={10} color="#fff" stroke={2.500} /></ToTop>
            </FooterCol>
          </Footer>
        </Page>
        <ScrollTrack>
          <Triangle color="#505050" />
          <ScrollThumb />
          <Triangle down color="#a3a3a3" />
        </ScrollTrack>
      </Viewport>
      <Taskbar>
        <TaskCell $w={60}><WindowsLogo /></TaskCell>
        <SearchBox><SearchGlass />Type here to search</SearchBox>
        <TaskCell $w={60}><svg width="20" height="20" viewBox="0 0 20 20"><circle cx="10" cy="10" r="8.500" fill="none" stroke="#000" strokeWidth="2.600" /></svg></TaskCell>
        <TaskCell $w={60}><TaskView /></TaskCell>
        <TaskCell $w={66}><Explorer /></TaskCell>
        <TaskCell $w={60}><Edge /></TaskCell>
        <TaskCell $w={62}><Store /></TaskCell>
        <TaskCell $w={63}><MailApp /></TaskCell>
        <TaskCell $w={62}><OpenMark><VisualStudio /></OpenMark></TaskCell>
        <TaskCell $w={61} $active><ChromeLogo /></TaskCell>
        <TaskCell $w={62}><Teams /></TaskCell>
        <TaskCell $w={64}><VSCode /></TaskCell>
        <Tray>
          <TrayCell $w={34}><HelpBadge /></TrayCell>
          <TrayCell $w={30}><Chevron w={16} h={9} color="#111" stroke={1.500} /></TrayCell>
          <TrayCell $w={30}><Cloud /></TrayCell>
          <TrayCell $w={31}><Battery /></TrayCell>
          <TrayCell $w={30}><Wifi /></TrayCell>
          <TrayCell $w={30}><Volume /></TrayCell>
          <TrayCell $w={42}>ENG</TrayCell>
          <Clock>1:51 PM<br />8/30/2020</Clock>
          <TrayCell $w={58} $pr={12}><Notification /></TrayCell>
          <ShowDesktop />
        </Tray>
      </Taskbar>
    </Screen>
  );
}
